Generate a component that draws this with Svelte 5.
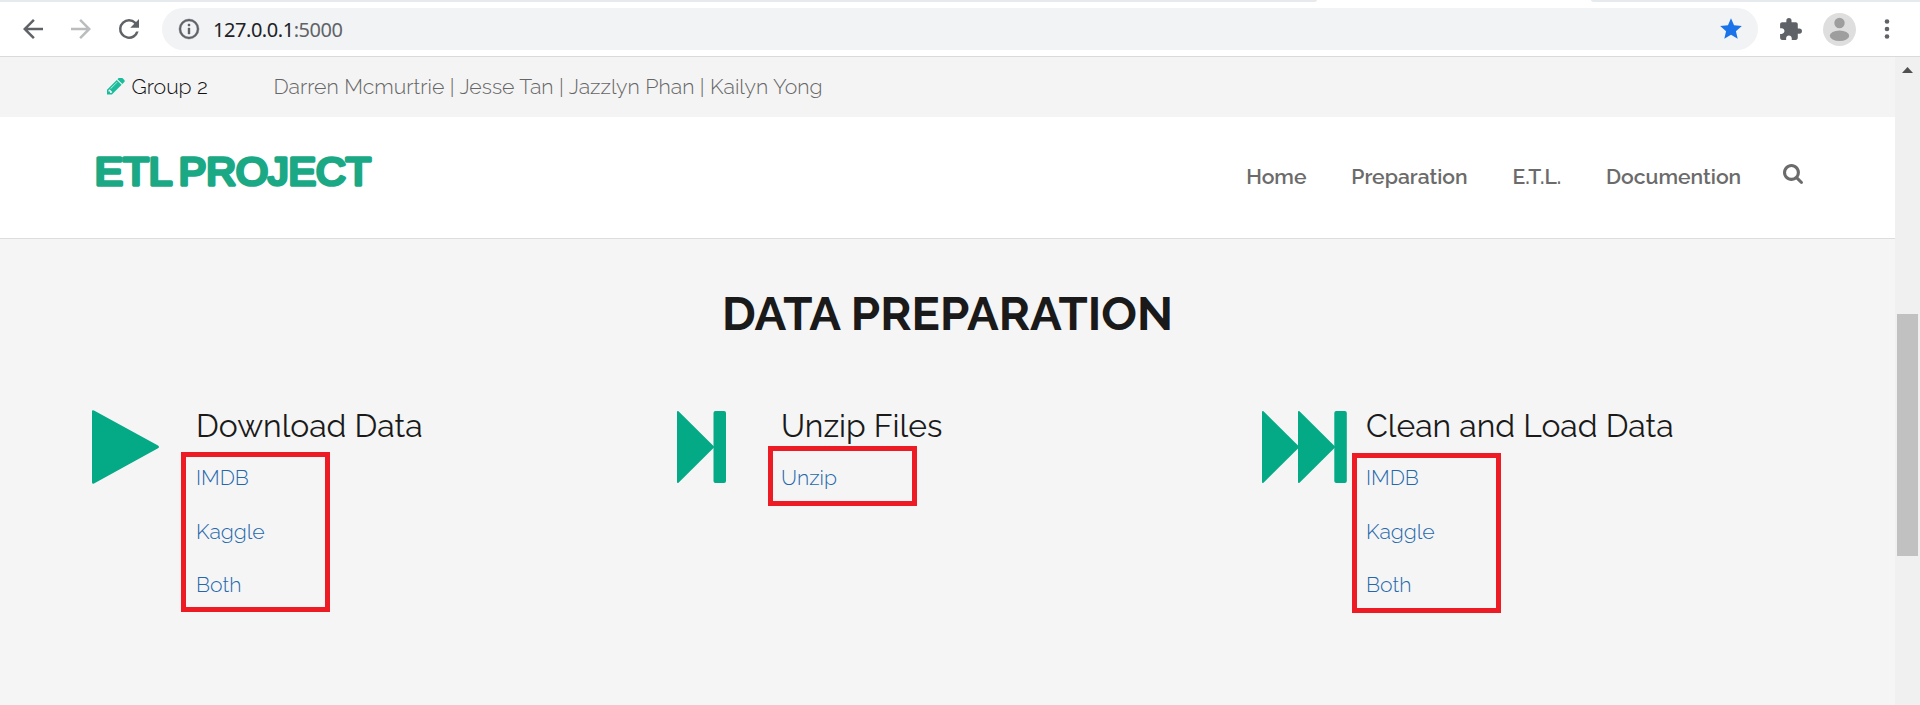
<script>
  const nav = ['Home', 'Preparation', 'E.T.L.', 'Documention'];
  const steps = [
    { title: 'Download Data', icon: 'play', links: ['IMDB', 'Kaggle', 'Both'], box: [-15, 42, 149, 160] },
    { title: 'Unzip Files', icon: 'step', links: ['Unzip'], box: [-13, 36, 149, 60] },
    { title: 'Clean and Load Data', icon: 'fast', links: ['IMDB', 'Kaggle', 'Both'], box: [-14, 43, 149, 160] }
  ];
</script>

<div class="window">
  <div class="tabstrip"><i></i><i></i></div>
  <div class="toolbar">
    <svg class="nav-icon back" viewBox="0 0 24 24"><path d="M20 11H7.83l5.59-5.59L12 4l-8 8 8 8 1.41-1.41L7.83 13H20v-2z" /></svg>
    <svg class="nav-icon fwd" viewBox="0 0 24 24"><path d="M12 4l-1.41 1.41L16.17 11H4v2h12.17l-5.58 5.59L12 20l8-8z" /></svg>
    <svg class="nav-icon reload" viewBox="0 0 24 24"><path d="M17.65 6.35A7.96 7.96 0 0 0 12 4a8 8 0 1 0 7.73 10h-2.08A6 6 0 1 1 12 6c1.66 0 3.14.69 4.22 1.78L13 11h7V4z" /></svg>
    <div class="omnibox">
      <svg class="info" viewBox="0 0 24 24"><path d="M11 7h2v2h-2zm0 4h2v6h-2zm1-9a10 10 0 1 0 0 20 10 10 0 0 0 0-20zm0 18a8 8 0 1 1 0-16 8 8 0 0 1 0 16z" /></svg>
      <span class="url">127.0.0.1<span class="port">:5000</span></span>
      <svg class="star" viewBox="0 0 24 24"><path d="M12 17.27L18.18 21l-1.64-7.03L22 9.24l-7.19-.61L12 2 9.19 8.63 2 9.24l5.46 4.73L5.82 21z" /></svg>
    </div>
    <svg class="puzzle" viewBox="0 0 24 24"><path d="M20.5 11H19V7c0-1.1-.9-2-2-2h-4V3.5a2.5 2.5 0 0 0-5 0V5H4c-1.1 0-1.99.9-1.99 2v3.8H3.5c1.49 0 2.7 1.21 2.7 2.7s-1.21 2.7-2.7 2.7H2V20c0 1.1.9 2 2 2h3.8v-1.5c0-1.49 1.21-2.7 2.7-2.7 1.49 0 2.7 1.21 2.7 2.7V22H17c1.1 0 2-.9 2-2v-4h1.5a2.5 2.5 0 0 0 0-5z" /></svg>
    <svg class="avatar" viewBox="0 0 33 33"><circle cx="16.5" cy="16.5" r="16.5" fill="#dedede" /><circle cx="16.5" cy="10" r="5.2" fill="#9e9e9e" /><ellipse cx="16.5" cy="22.8" rx="9.7" ry="5.2" fill="#9e9e9e" /></svg>
    <svg class="dots" viewBox="0 0 6 20"><circle cx="3" cy="2.5" r="2.3" /><circle cx="3" cy="10" r="2.3" /><circle cx="3" cy="17.5" r="2.3" /></svg>
  </div>

  <div class="viewport">
    <div class="page">
      <div class="topbar">
        <svg class="pencil" viewBox="128 256 1536 1536"><path d="M491 1536l91-91-235-235-91 91v107h128v128h107zm523-928q0-22-22-22-10 0-17 7l-542 542q-7 7-7 17 0 22 22 22 10 0 17-7l542-542q7-7 7-17zm-54-192l416 416-832 832h-416v-416zm683 96q0 53-37 90l-166 166-416-416 166-165q36-38 90-38 53 0 91 38l235 234q37 39 37 91z" /></svg>
        <span class="group">Group 2</span>
        <span class="authors">Darren Mcmurtrie | Jesse Tan | Jazzlyn Phan | Kailyn Yong</span>
      </div>
      <header>
        <svg class="logo" viewBox="0 0 280 56"><text y="41.9"><tspan x="-0.3" textLength="76" lengthAdjust="spacingAndGlyphs">ETL</tspan>{' '}<tspan x="83.7" textLength="192.3" lengthAdjust="spacingAndGlyphs">PROJECT</tspan></text></svg>
        <nav>
          {#each nav as item}<a href="#top">{item}</a>{/each}
          <svg class="search" viewBox="64 128 1664 1664"><path d="M1216 832q0-185-131.5-316.5t-316.5-131.5-316.5 131.5-131.5 316.5 131.5 316.5 316.5 131.5 316.5-131.5 131.5-316.5zm512 832q0 52-38 90t-90 38q-54 0-90-38l-343-342q-179 124-399 124-143 0-273.5-55.5t-225-150-150-225-55.5-273.5 55.5-273.5 150-225 225-150 273.5-55.5 273.5 55.5 225 150 150 225 55.5 273.5q0 220-124 399l343 343q37 37 37 90z" /></svg>
        </nav>
      </header>
      <main>
        <h2>DATA PREPARATION</h2>
        <div class="steps">
          {#each steps as step}
            <section>
              <svg class="step-icon" viewBox="0 0 90 74">
                {#if step.icon === 'play'}
                  <path d="M0 1.5Q0-.5 2 .6L66 35.6Q68 37 66 38.2L2 73.4Q0 74.2 0 72.5z" />
                {:else if step.icon === 'step'}
                  <path d="M0 2Q0 .5 1.5 1.2L37 36.5V37.5L1.5 72.8Q0 73.5 0 72z" /><rect x="36.5" y="1" width="12.5" height="72" rx="2" />
                {:else}
                  <path d="M0 2Q0 .5 1.5 1.2L37 36.5V37.5L1.5 72.8Q0 73.5 0 72z" /><path d="M36 2Q36 .5 37.5 1.2L73 36.5V37.5L37.5 72.8Q36 73.5 36 72z" /><rect x="72.3" y="1" width="12.5" height="72" rx="2" />
                {/if}
              </svg>
              <div class="body">
                <h3>{step.title}</h3>
                {#each step.links as link}<a href="#top">{link}</a>{/each}
                <div class="mark" style="left:{step.box[0]}px;top:{step.box[1]}px;width:{step.box[2]}px;height:{step.box[3]}px"></div>
              </div>
            </section>
          {/each}
        </div>
      </main>
    </div>
    <div class="scrollbar"><div class="arrow"></div><div class="thumb"></div></div>
  </div>
</div>

<style>
  :global(body) { margin: 0; }
  * { box-sizing: border-box; }
  .window { width: 1920px; height: 705px; overflow: hidden; display: flex; flex-direction: column; background: #fff; font-family: Raleway, Lato, sans-serif; }
  svg { display: block; flex: none; }
  a { text-decoration: none; white-space: nowrap; }
  .tabstrip { height: 2px; display: flex; justify-content: space-between; }
  .tabstrip i { background: #e7eaed; }
  .tabstrip i:first-child { width: 1317px; border-bottom-right-radius: 4px 2px; }
  .tabstrip i:last-child { width: 329px; border-bottom-left-radius: 4px 2px; }
  .toolbar { height: 55px; border-bottom: 1px solid #dadada; display: flex; align-items: center; padding: 0 30px 0 18px; fill: #5f6368; }
  .nav-icon { width: 30px; height: 30px; margin-right: 18px; }
  .fwd { fill: #babcbe; }
  .omnibox { width: 1596px; height: 42px; border-radius: 21px; background: #f1f3f4; display: flex; align-items: center; padding: 0 14px 0 15px; }
  .info { width: 24px; height: 24px; stroke: #5f6368; stroke-width: 0.4px; }
  .url { font: 20px/42px "Noto Sans", sans-serif; letter-spacing: -0.45px; color: #202124; margin-left: 12px; padding-top: 1px; flex: 1; }
  .port { color: #5f6368; }
  .star { width: 26px; height: 26px; fill: #1a73e8; }
  .puzzle { width: 25px; height: 25px; margin-left: 20px; }
  .avatar { width: 33px; height: 33px; margin-left: 20px; }
  .dots { width: 6px; height: 20px; margin-left: 28px; }
  .viewport { flex: 1; display: flex; min-height: 0; }
  .page { width: 1895px; }
  .topbar { height: 60px; background: #f4f4f4; display: flex; align-items: center; padding-left: 107px; font-size: 21.25px; font-weight: 300; line-height: 60px; white-space: nowrap; }
  .pencil { width: 18px; height: 18px; fill: #1abc9c; }
  .group { color: #111; margin-left: 6.5px; width: 142px; }
  .authors { color: #666; }
  header { height: 122px; background: #fff; border-bottom: 1px solid #ddd; display: flex; justify-content: space-between; padding: 26px 92px 0 95px; }
  .logo { width: 280px; height: 56px; overflow: visible; }
  .logo text { font: 39px "Liberation Sans", sans-serif; fill: #1ba985; stroke: #1ba985; stroke-width: 3.6px; stroke-linejoin: round; }
  nav { display: flex; gap: 44.8px; padding-top: 8px; font-size: 21.1px; line-height: 52px; font-weight: 600; color: #6b6b6b; }
  nav a { color: inherit; }
  .search { width: 20px; height: 20px; margin: 13px 0 0 -3px; fill: #6b6b6b; }
  main { height: 466px; background: #f5f5f5; padding: 45px 0 0 92px; }
  h2 { margin: 0 92px 0 0; text-align: center; font-size: 47.2px; line-height: 60px; font-weight: 700; color: #1a1a1a; }
  .steps { display: grid; grid-template-columns: repeat(3, 585px); margin-top: 66px; }
  section { display: flex; gap: 14px; }
  .step-icon { width: 90px; height: 74px; fill: #04a986; }
  .body { position: relative; display: flex; flex-direction: column; align-items: flex-start; padding-top: 1px; }
  h3 { margin: 0; font-size: 31.875px; line-height: 30px; font-weight: 400; color: #1a1a1a; white-space: nowrap; }
  .body a { font-size: 21.2px; line-height: 53.5px; font-weight: 300; color: #2468ac; }
  .body h3 + a { margin-top: 10px; }
  .mark { position: absolute; border: 5px solid #ed1c24; }
  .scrollbar { width: 25px; background: #f0f0f0; padding: 10px 2px 0; }
  .arrow { width: 11px; height: 6px; margin-left: 5px; background: #505050; clip-path: polygon(50% 0, 100% 100%, 0 100%); }
  .thumb { height: 242px; margin-top: 241px; background: #c1c1c1; }
</style>
